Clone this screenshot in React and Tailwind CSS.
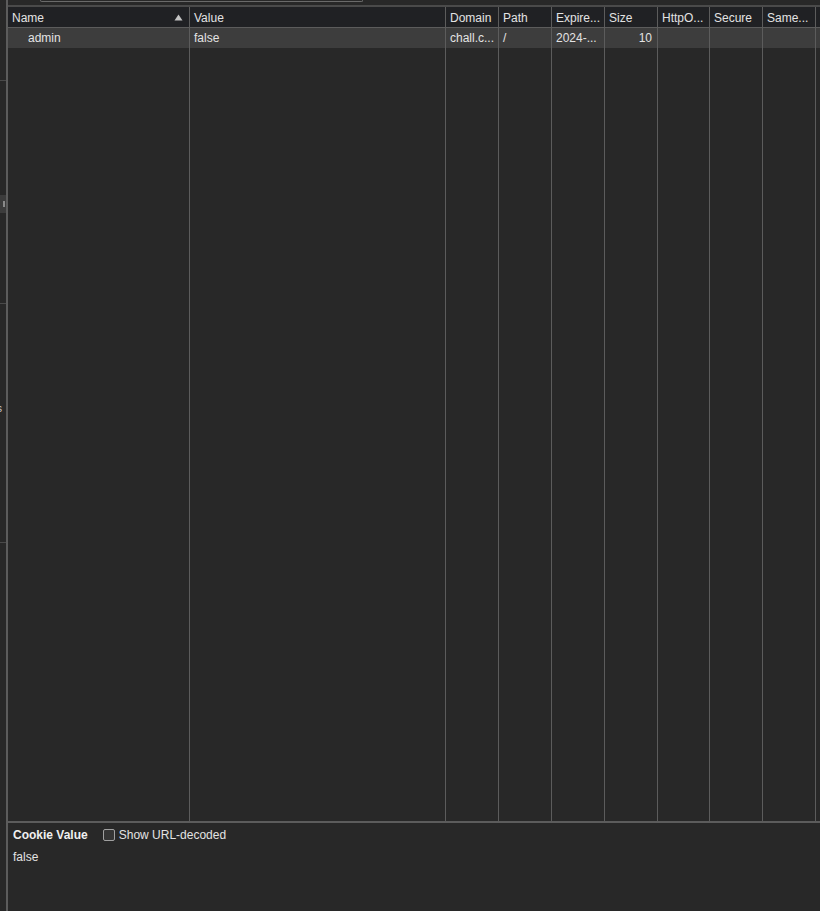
import React from "react";

const COLUMNS = [
  { key: "name", label: "Name", width: 182, sort: true },
  { key: "value", label: "Value", width: 256 },
  { key: "domain", label: "Domain", width: 53 },
  { key: "path", label: "Path", width: 53 },
  { key: "expires", label: "Expire...", width: 53 },
  { key: "size", label: "Size", width: 53, right: true },
  { key: "httpOnly", label: "HttpO...", width: 52 },
  { key: "secure", label: "Secure", width: 53 },
  { key: "sameSite", label: "Same...", width: 53 },
];

const cookie = {
  name: "admin",
  value: "false",
  domain: "chall.c...",
  path: "/",
  expires: "2024-...",
  size: "10",
  httpOnly: "",
  secure: "",
  sameSite: "",
};

const SortArrow = () => (
  <svg width="9" height="7" viewBox="0 0 9 7" className="shrink-0">
    <path d="M4.5 0.5 L8.5 6.5 L0.5 6.5 Z" fill="#c4c4c4" />
  </svg>
);

const Column = ({ col }) => (
  <div
    className="flex shrink-0 flex-col border-r border-[#5c5c5c]"
    style={{ width: col.width }}
  >
    <div className="flex h-[21px] items-center justify-between border-b border-[#5c5c5c] bg-[#202124] pl-[4px] pr-[6px] pt-px">
      <span className="whitespace-nowrap">{col.label}</span>
      {col.sort && <SortArrow />}
    </div>
    <div
      className={`flex h-[20px] items-center bg-[#3d3d3d] whitespace-nowrap ${
        col.right ? "justify-end pr-[5px]" : "pl-[4px]"
      } ${col.key === "name" ? "pl-[20px]" : ""}`}
    >
      {cookie[col.key]}
    </div>
    <div className="flex-1" />
  </div>
);

export default function App() {
  return (
    <div
      className="flex h-[911px] w-[820px] overflow-hidden bg-[#282828] text-[12px] text-[#e3e3e3]"
      style={{ fontFamily: '"Liberation Sans", Arial, sans-serif' }}
    >
      {/* cut-off sidebar on the left */}
      <div className="flex w-[8px] shrink-0 flex-col border-r-2 border-[#5c5c5c] bg-[#282828]">
        <div className="mt-[80px] h-px bg-[#4a4a4a]" />
        <div className="mt-[114px] flex h-[18px] items-center justify-end bg-[#3c3c3c] pr-[1px]">
          <span className="h-[6px] w-[2px] bg-[#8a8a8a]" />
        </div>
        <div className="mt-[90px] h-px bg-[#4a4a4a]" />
        <div className="mt-[100px] text-[10px] leading-none text-[#cfcfcf] -ml-[3px]">s</div>
        <div className="mt-[128px] h-px bg-[#4a4a4a]" />
      </div>

      <div className="flex min-w-0 flex-1 flex-col">
        {/* toolbar remnant */}
        <div className="h-[5px] shrink-0 border-b-2 border-[#4a4a4a] bg-[#282828] box-content">
          <div className="ml-[32px] h-[2px] w-[323px] rounded-b-[3px] border-x border-b border-[#6a6a6a]" />
        </div>

        {/* cookie table */}
        <div className="flex flex-1 border-b-2 border-[#5c5c5c]">
          {COLUMNS.map((col) => (
            <Column key={col.key} col={col} />
          ))}
          <div className="flex flex-1 flex-col">
            <div className="h-[21px] border-b border-[#5c5c5c] bg-[#202124]" />
            <div className="h-[20px] bg-[#3d3d3d]" />
          </div>
        </div>

        {/* cookie value panel */}
        <div className="flex h-[88px] shrink-0 flex-col px-[5px] pt-[4px]">
          <div className="flex h-[16px] items-center gap-[15px]">
            <span className="font-bold text-[#f0f0f0]">Cookie Value</span>
            <label className="flex items-center gap-[4px]">
              <span className="h-[12px] w-[12px] rounded-[2px] border border-[#a0a0a0] bg-[#353535]" />
              <span>Show URL-decoded</span>
            </label>
          </div>
          <div className="mt-[5px]">false</div>
        </div>
      </div>
    </div>
  );
}
